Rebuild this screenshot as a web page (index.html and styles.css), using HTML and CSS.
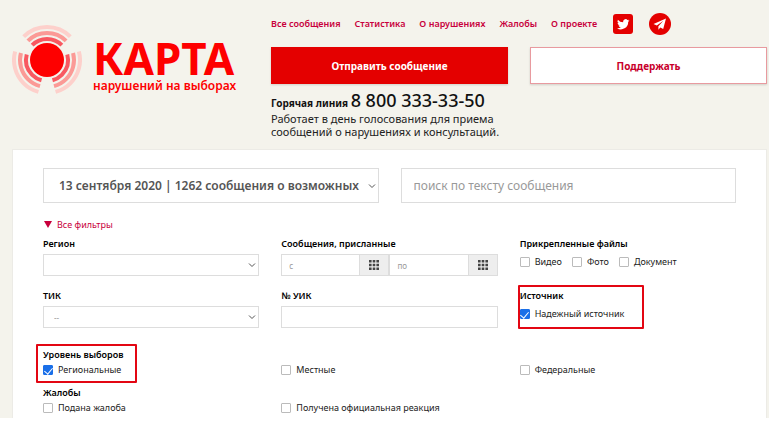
FILE: index.html
```html
<!DOCTYPE html>
<html lang="ru">
<head>
    <meta charset="UTF-8">
    <meta name="viewport" content="width=device-width, initial-scale=1.0">
    <title>Карта нарушений на выборах</title>
    <link rel="stylesheet" href="styles.css">
</head>
<body>
    <div class="page">
        <header class="header">
            <a class="logo" href="#">
                <svg class="logo-icon" width="70" height="70" viewBox="-35 -35 70 70" aria-hidden="true">
                    <g fill="none" stroke-width="4" transform="rotate(-135)">
                        <circle r="33" stroke="#fdd0cb" pathLength="360" stroke-dasharray="90 30"/>
                        <circle r="27" stroke="#fb9a96" pathLength="360" stroke-dasharray="90 30"/>
                        <circle r="21" stroke="#f85860" pathLength="360" stroke-dasharray="90 30"/>
                    </g>
                    <circle r="17" fill="#fe0000"/>
                </svg>
                <span class="logo-text">
                    <span class="logo-title">КАРТА</span>
                    <span class="logo-subtitle">нарушений на выборах</span>
                </span>
            </a>

            <div class="header-main">
                <nav class="nav">
                    <a href="#">Все сообщения</a>
                    <a href="#">Статистика</a>
                    <a href="#">О нарушениях</a>
                    <a href="#">Жалобы</a>
                    <a href="#">О проекте</a>
                    <a class="social" href="#" aria-label="Twitter">
                        <svg width="20" height="20" viewBox="0 0 20 20">
                            <rect width="20" height="20" rx="3" fill="#e40000"/>
                            <path transform="translate(4 4) scale(.52)" fill="#fff" d="M24 4.6a10 10 0 0 1-2.8.8 5 5 0 0 0 2.1-2.7 10 10 0 0 1-3.1 1.2 4.9 4.9 0 0 0-8.4 4.5A14 14 0 0 1 1.700 3.200a4.900 4.900 0 0 0 1.500 6.600 4.900 4.900 0 0 1-2.200-.6v.1a4.900 4.900 0 0 0 3.900 4.800 5 5 0 0 1-2.200.1 4.900 4.900 0 0 0 4.600 3.400A9.900 9.900 0 0 1 0 19.600 14 14 0 0 0 21.500 7.100 10 10 0 0 0 24 4.600z"/>
                        </svg>
                    </a>
                    <a class="social" href="#" aria-label="Telegram">
                        <svg width="22" height="22" viewBox="0 0 22 22">
                            <circle cx="11" cy="11" r="11" fill="#e40000"/>
                            <path fill="#fff" d="M17 5.500 4.500 11.100l3.300 1.300 6.600-4.700-5 5.500v3.500l1.900-2.300 2.900 1.700z"/>
                        </svg>
                    </a>
                </nav>
                <div class="actions">
                    <button type="button" class="btn btn-primary">Отправить сообщение</button>
                    <button type="button" class="btn">Поддержать</button>
                </div>
                <div class="hotline">
                    <p class="hotline-title">Горячая линия <strong>8 800 333-33-50</strong></p>
                    <p>Работает в день голосования для приема<br>сообщений о нарушениях и консультаций.</p>
                </div>
            </div>
        </header>

        <form class="card">
            <div class="search">
                <div class="select">
                    <select class="big-field" aria-label="Выборы">
                        <option>13 сентября 2020 | 1262 сообщения о возможных нарушениях</option>
                    </select>
                    <svg class="chevron" width="8" height="5" viewBox="0 0 8 5"><path d="M1 1l3 3 3-3"/></svg>
                </div>
                <input class="big-field" type="text" placeholder="поиск по тексту сообщения" aria-label="поиск по тексту сообщения">
            </div>

            <a class="toggle" href="#"><span class="triangle"></span>Все фильтры</a>

            <div class="filters">
                <div class="field">
                    <label class="title" for="region">Регион</label>
                    <div class="select">
                        <select class="control" id="region"><option></option></select>
                        <svg class="chevron" width="8" height="5" viewBox="0 0 8 5"><path d="M1 1l3 3 3-3"/></svg>
                    </div>
                </div>
                <div class="field">
                    <label class="title" for="date-from">Сообщения, присланные</label>
                    <div class="dates">
                        <div class="date">
                            <input class="control" type="text" id="date-from" placeholder="с">
                            <button type="button" aria-label="Выбрать дату">
                                <svg width="10" height="10" viewBox="0 0 10 10" fill="#444"><path d="M0 0h2.600v2.600H0zM3.700 0h2.600v2.600H3.700zM7.400 0H10v2.600H7.400zM0 3.700h2.600v2.600H0zM3.700 3.700h2.600v2.600H3.700zM7.400 3.700H10v2.600H7.400zM0 7.400h2.600V10H0zM3.700 7.400h2.600V10H3.700zM7.400 7.400H10V10H7.400z"/></svg>
                            </button>
                        </div>
                        <div class="date">
                            <input class="control" type="text" placeholder="по" aria-label="по">
                            <button type="button" aria-label="Выбрать дату">
                                <svg width="10" height="10" viewBox="0 0 10 10" fill="#444"><path d="M0 0h2.600v2.600H0zM3.700 0h2.600v2.600H3.700zM7.400 0H10v2.600H7.400zM0 3.700h2.600v2.600H0zM3.700 3.700h2.600v2.600H3.700zM7.400 3.700H10v2.600H7.400zM0 7.400h2.600V10H0zM3.700 7.400h2.600V10H3.700zM7.400 7.400H10V10H7.400z"/></svg>
                            </button>
                        </div>
                    </div>
                </div>
                <div class="field">
                    <span class="title">Прикрепленные файлы</span>
                    <div class="checks">
                        <label class="check"><input type="checkbox">Видео</label>
                        <label class="check"><input type="checkbox">Фото</label>
                        <label class="check"><input type="checkbox">Документ</label>
                    </div>
                </div>

                <div class="field">
                    <label class="title" for="tik">ТИК</label>
                    <div class="select">
                        <select class="control muted" id="tik"><option>--</option></select>
                        <svg class="chevron" width="8" height="5" viewBox="0 0 8 5"><path d="M1 1l3 3 3-3"/></svg>
                    </div>
                </div>
                <div class="field">
                    <label class="title" for="uik">№ УИК</label>
                    <input class="control" type="text" id="uik">
                </div>
                <div class="field">
                    <span class="title">Источник</span>
                    <div class="checks">
                        <label class="check"><input type="checkbox" checked>Надежный источник</label>
                    </div>
                    <span class="mark mark-source"></span>
                </div>
            </div>

            <div class="group">
                <span class="title">Уровень выборов</span>
                <div class="options">
                    <label class="check"><input type="checkbox" checked>Региональные</label>
                    <label class="check"><input type="checkbox">Местные</label>
                    <label class="check"><input type="checkbox">Федеральные</label>
                </div>
                <span class="mark mark-level"></span>
            </div>
            <div class="group">
                <span class="title">Жалобы</span>
                <div class="options">
                    <label class="check"><input type="checkbox">Подана жалоба</label>
                    <label class="check"><input type="checkbox">Получена официальная реакция</label>
                </div>
            </div>
        </form>
    </div>
</body>
</html>
```
FILE: styles.css
```css
* {
    margin: 0;
    padding: 0;
    box-sizing: border-box;
}

body {
    font-family: "Noto Sans", "Open Sans", sans-serif;
    font-size: 9px;
    line-height: 12px;
    color: #222;
    background-color: #fff;
    padding: 0 2px 4px 0;
}

a {
    color: #c8003c;
    text-decoration: none;
}

input, select, button {
    font-family: inherit;
}

.page {
    background-color: #f4f3ec;
    padding: 13px 2px 0 12px;
}

/* Header */
.header {
    display: grid;
    grid-template-columns: minmax(0, 237fr) minmax(0, 496fr);
    column-gap: 22px;
    margin-bottom: 11px;
}

.logo {
    display: flex;
    align-items: flex-start;
    gap: 11px;
    padding-top: 12px;
    color: #fe0000;
    font-weight: bold;
    white-space: nowrap;
}

.logo-icon {
    flex: none;
}

.logo-text {
    display: flex;
    flex-direction: column;
    padding-top: 11px;
}

.logo-title {
    font-size: 44px;
    line-height: 44px;
}

.logo-subtitle {
    font-size: 12px;
    font-weight: 600;
    line-height: 12px;
}

.nav {
    display: flex;
    align-items: center;
    gap: 14px;
    height: 22px;
    margin-bottom: 12px;
    font-weight: 600;
    white-space: nowrap;
}

.social {
    height: 22px;
    margin-left: 2px;
    display: flex;
    align-items: center;
}

.actions {
    display: grid;
    grid-template-columns: 1fr 1fr;
    column-gap: 22px;
}

.btn {
    height: 37px;
    border: 1px solid #e89a9f;
    background-color: #fff;
    color: #c8002c;
    font-size: 10px;
    font-weight: bold;
    box-shadow: 0 1px 2px rgba(0, 0, 0, 0.15);
    cursor: pointer;
}

.btn-primary {
    background-color: #e40000;
    border-color: #e40000;
    color: #fff;
}

.hotline {
    margin-top: 8px;
    font-size: 11px;
    line-height: 13px;
}

.hotline-title {
    font-size: 10px;
    line-height: 17px;
    font-weight: bold;
    color: #111;
}

.hotline-title strong {
    font-size: 18px;
    font-weight: 500;
}

/* Filter card */
.card {
    background-color: #fff;
    border: 1px solid #ecebe6;
    border-bottom: 0;
    padding: 18px 30px 2px;
}

.search {
    display: grid;
    grid-template-columns: 1fr 1fr;
    column-gap: 22px;
}

.select {
    position: relative;
    min-width: 0;
}

.select select {
    appearance: none;
}

.chevron {
    position: absolute;
    top: 50%;
    right: 3px;
    transform: translateY(-50%);
    fill: none;
    stroke: #555;
    pointer-events: none;
}

.big-field {
    display: block;
    width: 100%;
    min-width: 0;
    height: 35px;
    border: 1px solid #ddd;
    background-color: #fff;
    padding: 0 12px;
    font-size: 12px;
    color: #555;
}

select.big-field {
    padding: 0 16px 0 15px;
    font-weight: 600;
}

::placeholder {
    color: #999;
}

.toggle {
    display: flex;
    align-items: center;
    gap: 5px;
    margin-top: 15px;
    line-height: 13px;
}

.triangle {
    border: 4px solid transparent;
    border-top: 7px solid #c8003c;
    border-bottom: 0;
    margin-left: 1px;
}

.filters {
    display: grid;
    grid-template-columns: repeat(3, minmax(0, 1fr));
    gap: 13px 22px;
    margin-top: 6px;
}

.field, .group {
    position: relative;
}

.title {
    display: block;
    font-weight: 600;
    color: #000;
    line-height: 13px;
}

.field .title {
    margin-bottom: 4px;
}

.control {
    display: block;
    width: 100%;
    min-width: 0;
    height: 22px;
    border: 1px solid #ddd;
    background-color: #fff;
    padding: 0 7px;
    font-size: 8px;
    color: #333;
}

select.control {
    padding: 0 20px 0 10px;
}

.select .muted {
    color: #999;
}

.dates {
    display: grid;
    grid-template-columns: 1fr 1fr;
}

.date {
    display: flex;
}

.date button {
    flex: none;
    width: 29px;
    border: 1px solid #ddd;
    border-left: 0;
    background-color: #eee;
    display: flex;
    align-items: center;
    justify-content: center;
}

.checks {
    display: flex;
    gap: 10px;
}

.check {
    display: flex;
    align-items: center;
    gap: 5px;
    height: 16px;
    white-space: nowrap;
}

.check input {
    appearance: none;
    flex: none;
    width: 10px;
    height: 10px;
    border: 1px solid #bbb;
    border-radius: 1px;
    background-color: #fff;
    display: flex;
    justify-content: center;
}

.check input:checked {
    background-color: #1a6fe8;
    border-color: #1a6fe8;
}

.check input:checked::after {
    content: "";
    width: 4px;
    height: 7px;
    border: solid #fff;
    border-width: 0 1px 1px 0;
    transform: rotate(40deg);
}

.group {
    margin-top: 8px;
}

.filters + .group {
    margin-top: 20px;
}

.options {
    display: grid;
    grid-template-columns: repeat(3, minmax(0, 1fr));
    column-gap: 22px;
    margin-top: 1px;
}

/* Red frames around the chosen filters */
.mark {
    position: absolute;
    border: 2px solid #e30613;
    border-radius: 1px;
    pointer-events: none;
}

.mark-source {
    top: -4px;
    left: -2px;
    width: 126px;
    height: 44px;
}

.mark-level {
    top: -4px;
    left: -7px;
    width: 101px;
    height: 39px;
}
```
